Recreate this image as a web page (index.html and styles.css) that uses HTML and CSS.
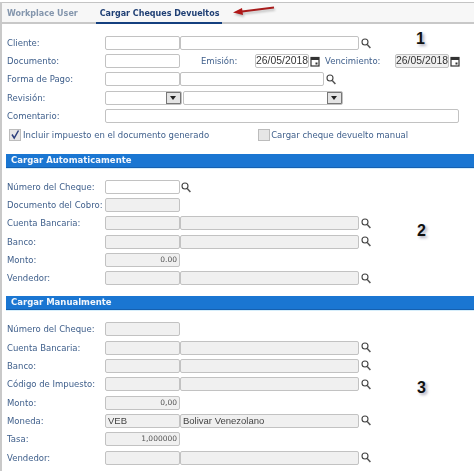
FILE: index.html
```html
<!DOCTYPE html>
<html lang="es">
<head>
<meta charset="utf-8">
<title>Cargar Cheques Devueltos</title>
<link rel="stylesheet" href="styles.css">
</head>
<body>
<svg class="defs" width="0" height="0" aria-hidden="true">
  <symbol id="lens" viewBox="0 0 10 11">
    <circle cx="4" cy="4" r="3" fill="none" stroke="#444" stroke-width="1.1"/>
    <path d="M6.2 6.4 9.4 10" stroke="#555" stroke-width="1.5" fill="none"/>
  </symbol>
  <symbol id="cal" viewBox="0 0 10 11">
    <rect x="1" y="1.5" width="8" height="8.5" fill="#fff" stroke="#333" stroke-width="1.2"/>
    <rect x="1" y="1.5" width="8" height="2.5" fill="#333"/>
    <rect x="5.5" y="6.5" width="2" height="2" fill="#333"/>
  </symbol>
</svg>
<div class="page">
  <nav class="tabs">
    <span class="tab">Workplace User</span>
    <span class="tab tab-active">Cargar Cheques Devueltos</span>
  </nav>

  <section class="form form-top">
    <div class="row">
      <label class="lbl">Cliente:</label>
      <span class="in w75"></span><span class="in w179"></span>
      <svg class="ico"><use href="#lens"/></svg>
    </div>
    <div class="row">
      <label class="lbl">Documento:</label>
      <span class="in w75"></span>
      <label class="lbl-emi">Emisión:</label>
      <span class="in date">26/05/2018</span>
      <svg class="ico-cal"><use href="#cal"/></svg>
      <label class="lbl-ven">Vencimiento:</label>
      <span class="in date off">26/05/2018</span>
      <svg class="ico-cal"><use href="#cal"/></svg>
    </div>
    <div class="row">
      <label class="lbl">Forma de Pago:</label>
      <span class="in w75"></span><span class="in w144"></span>
      <svg class="ico"><use href="#lens"/></svg>
    </div>
    <div class="row">
      <label class="lbl">Revisión:</label>
      <span class="in w77 sel"><i class="btn"></i></span><span class="in w160 sel"><i class="btn"></i></span>
    </div>
    <div class="row">
      <label class="lbl">Comentario:</label>
      <span class="in w354"></span>
    </div>
    <div class="checks">
      <label class="chk"><span class="box on">
        <svg viewBox="0 0 12 12" width="12" height="12"><path d="M3 5.5 5.2 9 9.5 1.5" fill="none" stroke="#2c3f7c" stroke-width="1.5"/></svg>
      </span>Incluir impuesto en el documento generado</label>
      <label class="chk chk-2"><span class="box"></span>Cargar cheque devuelto manual</label>
    </div>
  </section>

  <h2 class="bar">Cargar Automaticamente</h2>
  <section class="form form-auto">
    <div class="row"><label class="lbl">Número del Cheque:</label><span class="in w75"></span><svg class="ico ico-near"><use href="#lens"/></svg></div>
    <div class="row"><label class="lbl">Documento del Cobro:</label><span class="in w75 off"></span></div>
    <div class="row"><label class="lbl">Cuenta Bancaria:</label><span class="in w75 off"></span><span class="in w179 off"></span><svg class="ico"><use href="#lens"/></svg></div>
    <div class="row"><label class="lbl">Banco:</label><span class="in w75 off"></span><span class="in w179 off"></span><svg class="ico"><use href="#lens"/></svg></div>
    <div class="row"><label class="lbl">Monto:</label><span class="in w75 off num">0.00</span></div>
    <div class="row"><label class="lbl">Vendedor:</label><span class="in w75 off"></span><span class="in w179 off"></span><svg class="ico"><use href="#lens"/></svg></div>
  </section>

  <h2 class="bar">Cargar Manualmente</h2>
  <section class="form form-man">
    <div class="row"><label class="lbl">Número del Cheque:</label><span class="in w75 off"></span></div>
    <div class="row"><label class="lbl">Cuenta Bancaria:</label><span class="in w75 off"></span><span class="in w179 off"></span><svg class="ico"><use href="#lens"/></svg></div>
    <div class="row"><label class="lbl">Banco:</label><span class="in w75 off"></span><span class="in w179 off"></span><svg class="ico"><use href="#lens"/></svg></div>
    <div class="row"><label class="lbl">Código de Impuesto:</label><span class="in w75 off"></span><span class="in w179 off"></span><svg class="ico"><use href="#lens"/></svg></div>
    <div class="row"><label class="lbl">Monto:</label><span class="in w75 off num">0,00</span></div>
    <div class="row"><label class="lbl">Moneda:</label><span class="in w75 off val">VEB</span><span class="in w179 off val">Bolivar Venezolano</span><svg class="ico"><use href="#lens"/></svg></div>
    <div class="row"><label class="lbl">Tasa:</label><span class="in w75 off num">1,000000</span></div>
    <div class="row"><label class="lbl">Vendedor:</label><span class="in w75 off"></span><span class="in w179 off"></span><svg class="ico"><use href="#lens"/></svg></div>
  </section>
</div>

<span class="note note-1">1</span>
<span class="note note-2">2</span>
<span class="note note-3">3</span>
<svg class="arrow" width="46" height="14" viewBox="0 0 46 14" aria-hidden="true">
  <path d="M42 3.5 10 7.5" stroke="#a81c1c" stroke-width="2" fill="none"/>
  <path d="M1 8.5 10 4 11 11Z" fill="#b01818"/>
</svg>
</body>
</html>
```
FILE: styles.css
```css
* { box-sizing: border-box; }
html, body { margin: 0; padding: 0; }
body {
  position: relative;
  width: 474px;
  height: 471px;
  overflow: hidden;
  background: #fff;
  font-family: "DejaVu Sans", Verdana, sans-serif;
  font-size: 8.5px;
  color: #40608c;
}
.defs { position: absolute; }
.page {
  height: 471px;
  margin-top: 2px;
  border-left: 2px solid #c9c9c9;
  filter: blur(.3px);
}
.tabs {
  display: flex;
  height: 22px;
  padding-left: 5px;
  gap: 18px;
  border-top: 1px solid #c4c4c4;
  border-bottom: 2px solid #c8c8c8;
  background: #f7f7f7;
  font-weight: bold;
  font-size: 8px;
}
.tab {
  padding-top: 6px;
  color: #8496ad;
}
.tab-active {
  color: #1f3f74;
  padding: 6px 3px 0 4px;
  height: 21px;
  border-bottom: 2px solid #14407f;
}
.form { padding-left: 5px; }
.form-top { padding-top: 10px; height: 130px; }
.form-auto { padding-top: 10px; height: 128px; }
.form-man { padding-top: 10px; }
.form-man .row { height: 18.35px; }
.row {
  display: flex;
  align-items: center;
  height: 18.2px;
}
.lbl { width: 98px; flex: none; white-space: nowrap; }
.lbl-emi { margin-left: 21px; width: 54px; flex: none; }
.lbl-ven { margin-left: 5px; width: 70px; flex: none; }
.in {
  display: block;
  position: relative;
  height: 14px;
  flex: none;
  background: #fff;
  border: 1px solid #c2c2c2;
  border-radius: 2px;
  font-family: "Liberation Sans", Arial, sans-serif;
  font-size: 9.5px;
  line-height: 12px;
  color: #444;
  overflow: hidden;
  white-space: nowrap;
}
.off { background: #f0f0f0; }
.num { text-align: right; padding-right: 2px; font-family: "DejaVu Sans", sans-serif; font-size: 7.5px; color: #555; }
.val { padding-left: 2px; }
.w75 { width: 75px; }
.w77 { width: 77px; }
.w144 { width: 144px; }
.w160 { width: 160px; margin-left: 1px; }
.w179 { width: 179px; }
.w354 { width: 354px; }
.date { width: 54px; padding-left: 0; font-size: 10.4px; color: #333; }
.btn {
  position: absolute;
  right: 0;
  top: 0;
  width: 15px;
  height: 12px;
  background: #e4e4e4;
  border: 1px solid #777;
}
.btn::after {
  content: "";
  position: absolute;
  left: 3px;
  top: 3px;
  border: 3.5px solid transparent;
  border-top: 4px solid #222;
  border-bottom: 0;
}
.ico { width: 10px; height: 11px; margin-left: 2px; flex: none; }
.ico-near { margin-left: 1px; }
.ico-cal { width: 10px; height: 11px; margin-left: 1px; flex: none; }
.checks { display: flex; height: 23px; padding-top: 3px; }
.chk { display: flex; align-items: center; gap: 2px; height: 14px; margin-left: 2px; white-space: nowrap; }
.chk-2 { margin-left: 49px; gap: 1px; }
.box {
  display: block;
  width: 12px;
  height: 12px;
  background: #e6e6e6;
  border: 1px solid #bcbcbc;
  flex: none;
}
.box.on svg { display: block; margin: -1px; }
.bar {
  margin: 0 0 0 4px;
  height: 14px;
  background: #1a76d2;
  border-bottom: 1px solid #1560b0;
  color: #f2f6fb;
  font-size: 8.5px;
  line-height: 13px;
  padding-left: 5px;
  font-weight: bold;
  box-shadow: 0 1px 0 #d6eefb;
}
.note {
  position: absolute;
  font-family: "Liberation Sans", Arial, sans-serif;
  font-weight: bold;
  font-size: 16px;
  line-height: 16px;
  color: #111;
  text-shadow: 2px 2px 3px #aab;
}
.note-1 { left: 416px; top: 31px; }
.note-2 { left: 417px; top: 223px; }
.note-3 { left: 417px; top: 380px; }
.arrow { position: absolute; left: 232px; top: 4px; filter: drop-shadow(1px 2px 1px #bbb); }
```
